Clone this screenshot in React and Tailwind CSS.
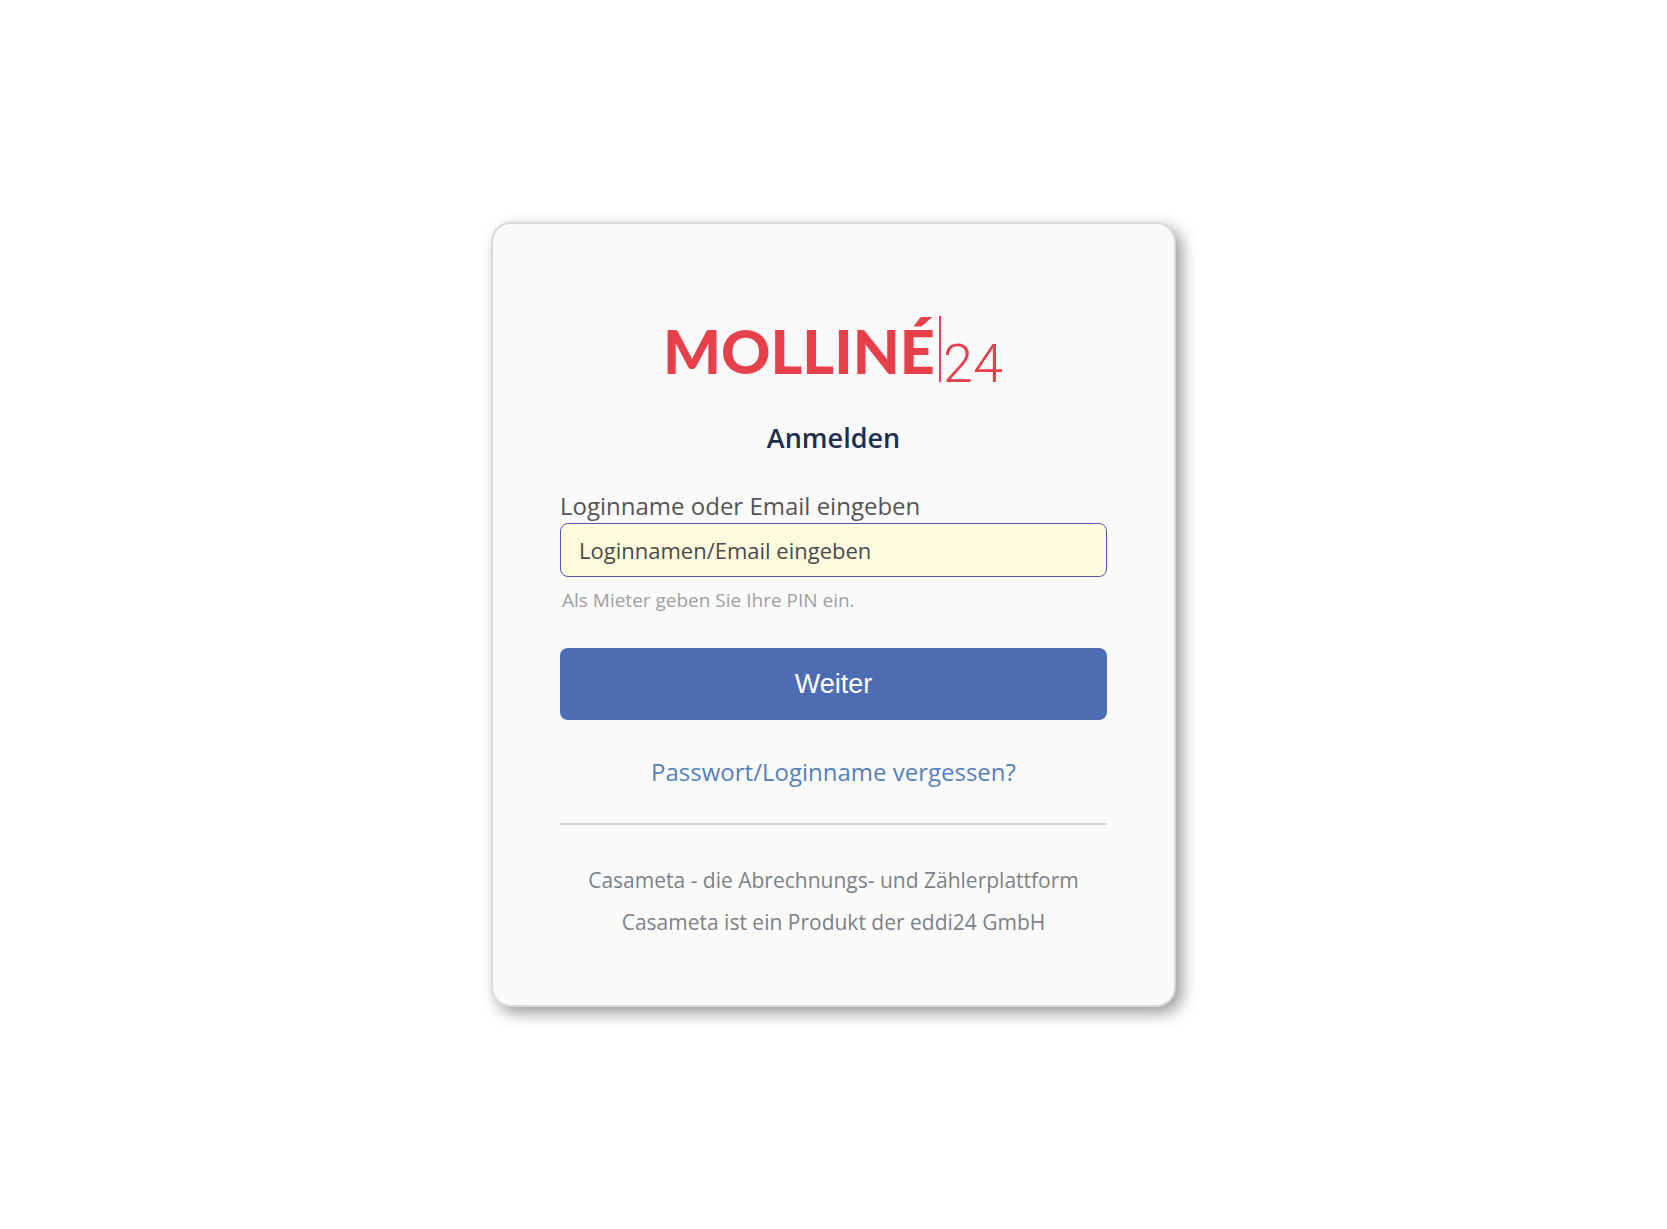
import React, { useState } from 'react';

const Logo = () => (
  <svg
    width="340"
    height="84"
    viewBox="0 0 340 84"
    className="mx-auto overflow-visible"
    fill="#e8404a"
    role="img"
    aria-label="Molliné24"
  >
    <text x="-1" y="70" fontSize="61" className="font-[Lato,sans-serif] font-black">
      MOLLINÉ
    </text>
    <rect x="275" y="12" width="2" height="66" />
    <text x="279" y="78" fontSize="54" className="font-[Roboto,sans-serif] font-light">
      24
    </text>
  </svg>
);

const footerLines = [
  'Casameta - die Abrechnungs- und Zählerplattform',
  'Casameta ist ein Produkt der eddi24 GmbH',
];

const App = () => {
  const [login, setLogin] = useState('');

  return (
    <main className="flex min-h-screen items-center justify-center bg-white font-['Open_Sans',sans-serif]">
      <div className="w-full max-w-[685px] rounded-[20px] border-2 border-[#d9d9d9] bg-[#fafafa] px-[67px] pt-[80px] pb-[62px] shadow-[6px_6px_16px_rgba(0,0,0,0.4)]">
        <Logo />

        <h1 className="mt-8 text-center text-[27px] leading-9 font-semibold text-[#1f2d50]">
          Anmelden
        </h1>

        <form className="mt-8" onSubmit={(e) => e.preventDefault()}>
          <label htmlFor="login" className="block text-2xl leading-[35px] text-[#555555]">
            Loginname oder Email eingeben
          </label>
          <input
            id="login"
            type="text"
            value={login}
            onChange={(e) => setLogin(e.target.value)}
            placeholder="Loginnamen/Email eingeben"
            className="block h-[54px] w-full rounded-lg border border-[#5357ae] bg-[#fffadd] px-[18px] text-[22px] text-[#4a4a4a] outline-none placeholder:text-[#4a4a4a]"
          />
          <p className="mt-2 px-0.5 text-[19px] leading-[31px] text-[#9f9f9f]">
            Als Mieter geben Sie Ihre PIN ein.
          </p>
          <button
            type="submit"
            className="mt-8 block h-[72px] w-full rounded-lg bg-[#4e6cb4] font-['Liberation_Sans',sans-serif] text-[27px] text-white"
          >
            Weiter
          </button>
        </form>

        <p className="mt-8 text-center text-2xl leading-[39px]">
          <a href="#" className="text-[#5580bd]">
            Passwort/Loginname vergessen?
          </a>
        </p>

        <hr className="mt-8 border-t-2 border-[#cdd3d6]" />

        <footer className="mt-[34px] text-center text-[21px] leading-[42px] text-[#7d8287]">
          {footerLines.map((line) => (
            <p key={line}>{line}</p>
          ))}
        </footer>
      </div>
    </main>
  );
};

export default App;
